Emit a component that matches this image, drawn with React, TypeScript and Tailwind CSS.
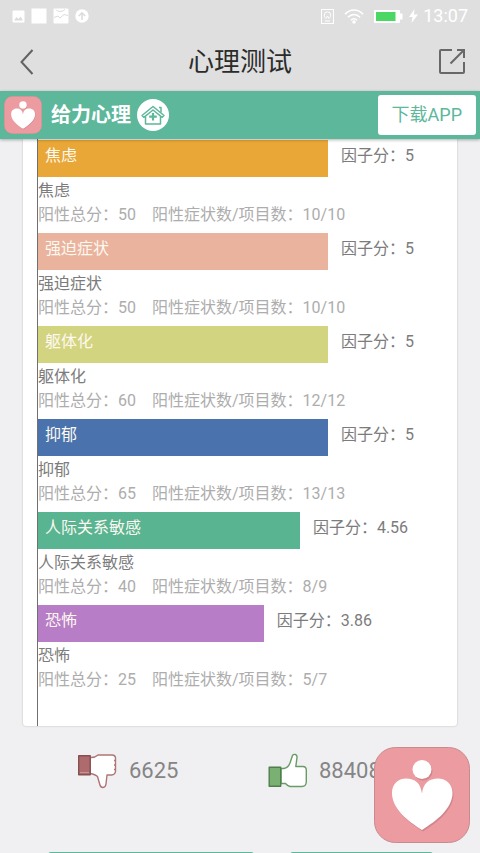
import React from "react";

type Factor = {
  name: string;
  color: string;
  width: number;
  score: string;
  total: number;
  items: string;
};

const factors: Factor[] = [
  { name: "焦虑", color: "bg-[#e9a737]", width: 69.2, score: "5", total: 50, items: "10/10" },
  { name: "强迫症状", color: "bg-[#eab39d]", width: 69.2, score: "5", total: 50, items: "10/10" },
  { name: "躯体化", color: "bg-[#d3d47f]", width: 69.2, score: "5", total: 60, items: "12/12" },
  { name: "抑郁", color: "bg-[#4a73ae]", width: 69.2, score: "5", total: 65, items: "13/13" },
  { name: "人际关系敏感", color: "bg-[#59b492]", width: 62.5, score: "4.56", total: 40, items: "8/9" },
  { name: "恐怖", color: "bg-[#b77dc6]", width: 53.9, score: "3.86", total: 25, items: "5/7" },
];

function HeartLogo({ className }: { className: string }) {
  return (
    <svg viewBox="0 0 96 96" className={className} aria-hidden="true">
      <rect x="0.5" y="0.5" width="95" height="95" rx="21" fill="#ec9ca0" stroke="#c98a8e" />
      <g fill="#b9747a" opacity="0.55" transform="translate(1 1.5)">
        <circle cx="48" cy="22.5" r="9.5" />
        <path d="M48 83C34 74 18 62 18 46c0-9 6-14.5 14-14.5 9 0 15 5 16 15 1-10 7-15 16-15 8 0 14.5 5.5 14.5 14.5C78.5 62 62 74 48 83Z" />
      </g>
      <g fill="#fff">
        <circle cx="48" cy="22.5" r="9.5" />
        <path d="M48 83C34 74 18 62 18 46c0-9 6-14.5 14-14.5 9 0 15 5 16 15 1-10 7-15 16-15 8 0 14.5 5.5 14.5 14.5C78.5 62 62 74 48 83Z" />
      </g>
    </svg>
  );
}

function StatusBar() {
  return (
    <div className="flex h-8 shrink-0 items-center justify-between px-3 text-white">
      <div className="flex items-center gap-[6px]">
        <svg width="13" height="13" viewBox="0 0 13 13" aria-hidden="true">
          <rect x="0.5" y="0.5" width="12" height="12" rx="1" fill="#fff" />
          <path d="M2 10.5 4.5 7l2 2 2-2.5 2.5 4Z" fill="#dcdcdc" />
        </svg>
        <svg width="16" height="16" viewBox="0 0 16 16" aria-hidden="true">
          <rect x="0.5" y="0.5" width="15" height="15" fill="#fff" />
        </svg>
        <svg width="16" height="16" viewBox="0 0 16 16" aria-hidden="true">
          <rect x="0.5" y="0.5" width="15" height="15" rx="1" fill="#fff" />
          <path d="M1 9.5 5 8l2 2 4-3.5 4 1" fill="none" stroke="#dcdcdc" />
          <path d="M3 1.5q1 2 4 2t5-2" fill="none" stroke="#dcdcdc" />
        </svg>
        <svg width="14" height="14" viewBox="0 0 14 14" aria-hidden="true">
          <circle cx="7" cy="7" r="6.7" fill="#fff" />
          <path d="M7 11V4M3.8 7 7 3.8 10.2 7" fill="none" stroke="#dcdcdc" strokeWidth="1.6" />
        </svg>
      </div>
      <div className="flex items-center">
        <svg width="13" height="15" viewBox="0 0 13 15" fill="none" stroke="#fff" aria-hidden="true">
          <rect x="0.5" y="0.5" width="12" height="14" />
          <path d="M5 9.5C3.5 8 3.3 7 3.3 6a3.2 3.2 0 0 1 6.4 0c0 1-.2 2-1.7 3.5M5 9.5 6.5 7 8 9.5M4 12h5" />
        </svg>
        <svg className="ml-[10px]" width="20" height="15" viewBox="0 0 20 15" fill="none" stroke="#fff" strokeWidth="1.6" aria-hidden="true">
          <path d="M1 5.3C6-.4 14-.4 19 5.3M4 8.3c3.5-3.7 8.5-3.7 12 0M7 11.2c2-1.9 4-1.9 6 0" />
          <circle cx="10" cy="13" r="1" fill="#fff" />
        </svg>
        <svg className="ml-[10px]" width="29" height="13" viewBox="0 0 29 13" aria-hidden="true">
          <rect width="26" height="13" rx="1" fill="#fff" />
          <rect x="26" y="3.5" width="2.5" height="6" fill="#fff" />
          <rect x="2" y="2" width="19.5" height="9" fill="#4bd763" />
        </svg>
        <svg className="ml-[6px]" width="9" height="14" viewBox="0 0 9 14" aria-hidden="true">
          <path d="M5.5 0 0 8h3.5L2.5 14 9 5.5H5Z" fill="#fff" />
        </svg>
        <span className="ml-[5px] text-[18px] leading-6">13:07</span>
      </div>
    </div>
  );
}

function TitleBar() {
  return (
    <div className="flex h-[59px] shrink-0 items-center justify-between px-[14px]">
      <button type="button" aria-label="返回" className="flex w-7 justify-center">
        <svg width="16" height="26" viewBox="0 0 16 26" fill="none" stroke="#626262" strokeWidth="2" aria-hidden="true">
          <path d="M12.5 1 1.5 13l11 12" />
        </svg>
      </button>
      <h1 className="text-[26px] leading-8 text-[#2b2b2b]">心理测试</h1>
      <button type="button" aria-label="分享" className="w-7">
        <svg width="28" height="27" viewBox="0 0 28 27" fill="none" stroke="#686868" strokeWidth="2" aria-hidden="true">
          <path d="M14 2H3q-1 0-1 1v21q0 1 1 1h22q1 0 1-1V14M19 2h7v8M25.5 2.5 12.5 15.5" />
        </svg>
      </button>
    </div>
  );
}

function BrandBar() {
  return (
    <div className="relative z-10 flex h-12 shrink-0 items-center justify-between bg-[#5cb79b] px-1 shadow-[0_1px_3px_rgba(0,0,0,0.3)]">
      <a href="#home" className="flex items-center text-white">
        <HeartLogo className="size-[38px]" />
        <span className="ml-[9px] text-[20px] font-bold leading-7">给力心理</span>
        <svg className="ml-[6px]" width="32" height="32" viewBox="0 0 32 32" aria-hidden="true">
          <circle cx="16" cy="16" r="16" fill="#fff" />
          <g fill="none" stroke="#5cb79b" strokeWidth="1.5" strokeLinejoin="round">
            <path d="M5 16.5 16 7.5l11 9-1.8 1.8L16 11l-9.2 7.3Z" />
            <path d="M8.5 17.5V25h15v-7.5M22 8.5h2v5" />
            <path d="M16 14v7.5M12.2 17.7h7.6" strokeWidth="2.2" />
          </g>
        </svg>
      </a>
      <button type="button" className="h-10 rounded-[3px] bg-white px-[14px] text-[18px] leading-6 text-[#5cb79b]">
        下载APP
      </button>
    </div>
  );
}

function FactorRow({ factor }: { factor: Factor }) {
  return (
    <li className="pb-[6px]">
      <div className="flex h-[37px] leading-8">
        <div className={`${factor.color} pl-[7px] text-[#fdf8f0]`} style={{ width: `${factor.width}%` }}>
          {factor.name}
        </div>
        <span className="ml-[13px] text-[#7c7c7c]">因子分：{factor.score}</span>
      </div>
      <div className="pt-[2px] leading-6">
        <p className="text-[#7c7c7c]">{factor.name}</p>
        <p className="flex gap-4 text-[#adadad]">
          <span>阳性总分：{factor.total}</span>
          <span>阳性症状数/项目数：{factor.items}</span>
        </p>
      </div>
    </li>
  );
}

function ThumbDown() {
  return (
    <svg width="39" height="36" viewBox="0 0 39 36" strokeWidth="1.4" strokeLinejoin="round" aria-hidden="true">
      <path
        d="M12 4.5q5 .3 8-2.5h14q3.5.3 3.5 3v13.5q-.3 3-4 3.5H29l-1 9q-.5 3.5-3 3.5t-3.2-3l-2.3-8q-2-2-7.5-3Z"
        fill="#fff"
        stroke="#b07576"
      />
      <path d="M36 7.5h1.5M36 12h1.5M36 16.5h1.5" stroke="#b07576" />
      <rect x="0.7" y="2.7" width="11.5" height="19" fill="#ae6b6d" stroke="#864f50" />
      <path d="M2 19.5h9" stroke="#c99293" strokeWidth="1" />
    </svg>
  );
}

function ThumbUp() {
  return (
    <svg width="39" height="36" viewBox="0 0 39 36" strokeWidth="1.4" strokeLinejoin="round" aria-hidden="true">
      <path
        d="M13 15.5h3q4-.5 6-5.5l2.5-7.5q1-1.5 3-1 1.8.7 1.5 3L27.8 13.5H35q3.3.2 3.3 3.5v12q-.3 4.5-4.3 4.5H22q-2.5-.5-4.5-3H13Z"
        fill="#fff"
        stroke="#6a9a67"
      />
      <rect x="1.2" y="14.2" width="11.5" height="19" fill="#7bb073" stroke="#4f7f4d" />
    </svg>
  );
}

export default function App() {
  return (
    <div className="relative flex h-screen flex-col overflow-hidden bg-[#f0f0f2] font-[Roboto,'Noto_Sans_CJK_SC',sans-serif]">
      <header className="flex shrink-0 flex-col bg-[#dfdfdf]">
        <StatusBar />
        <TitleBar />
        <BrandBar />
      </header>

      <main className="min-h-0 flex-1 overflow-hidden">
        <section className="mx-[23px] rounded-b-[3px] bg-white pl-[14px] shadow-[0_0_2px_rgba(0,0,0,0.25)]">
          <ul className="border-l border-[#707070] pb-7 pt-px text-[16px]">
            {factors.map((factor) => (
              <FactorRow key={factor.name} factor={factor} />
            ))}
          </ul>
        </section>

        <div className="mt-[27px] grid grid-cols-2 pl-[78px] pr-[22px] text-[22px] leading-8 text-[#858585]">
          <button type="button" className="flex items-center gap-3">
            <ThumbDown />
            6625
          </button>
          <button type="button" className="flex items-center gap-3">
            <ThumbUp />
            88408
          </button>
        </div>

        <div className="mt-[63px] flex gap-9 pl-12 pr-[47px]">
          <button type="button" aria-label="重新测试" className="h-12 flex-[206] rounded-[3px] bg-[#5cb79b]" />
          <button type="button" aria-label="更多测试" className="h-12 flex-[143] rounded-[3px] bg-[#5cb79b]" />
        </div>
      </main>

      <a href="#app" aria-label="给力心理" className="absolute bottom-[10px] right-[10px] z-20">
        <HeartLogo className="size-24" />
      </a>
    </div>
  );
}
